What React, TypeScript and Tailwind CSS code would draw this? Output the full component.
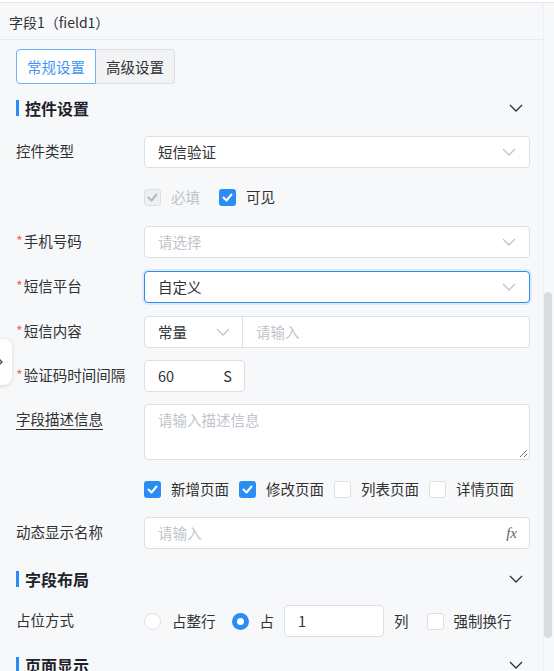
import { ReactNode } from 'react'

const font = { fontFamily: '"Noto Sans CJK SC", "Noto Sans", sans-serif' }

function Chevron({ className = '' }: { className?: string }) {
  return (
    <svg width="14" height="8" viewBox="0 0 14 8" fill="none" className={className}>
      <path d="M1 1l6 6 6-6" stroke="currentColor" strokeWidth="1.3" />
    </svg>
  )
}

function Check() {
  return (
    <svg width="11" height="9" viewBox="0 0 11 9" fill="none">
      <path d="M1.5 4.5l3 3 5-6" stroke="currentColor" strokeWidth="2" strokeLinecap="round" strokeLinejoin="round" />
    </svg>
  )
}

function Box({ checked, disabled }: { checked?: boolean; disabled?: boolean }) {
  if (disabled)
    return (
      <span className="flex w-[17px] h-[17px] items-center justify-center rounded-[3px] border border-[#dcdfe6] bg-[#eef0f3] text-[#b4b8bf]">
        <Check />
      </span>
    )
  if (checked)
    return (
      <span className="flex w-[17px] h-[17px] items-center justify-center rounded-[3px] bg-[#2a8cf5] text-white">
        <Check />
      </span>
    )
  return <span className="block w-[17px] h-[17px] rounded-[3px] border border-[#dcdfe6] bg-white" />
}

function SectionTitle({ title, className = '' }: { title: string; className?: string }) {
  return (
    <div className={`flex items-center justify-between h-6 ${className}`}>
      <div className="flex items-center gap-[6px]">
        <span className="block w-[3px] h-[16px] bg-[#2a8cf5]" />
        <span className="text-[16px] font-bold text-[#1d2129]">{title}</span>
      </div>
      <Chevron className="text-[#303133] mr-[7px]" />
    </div>
  )
}

function Label({ text, required, underline }: { text: string; required?: boolean; underline?: boolean }) {
  return (
    <div className="w-[128px] shrink-0 h-8 flex items-center pb-[3px] text-[#303133]">
      {required && <span className="text-[#f56c6c] mr-[1px]">*</span>}
      <span className={underline ? 'underline underline-offset-4' : ''}>{text}</span>
    </div>
  )
}

function Row({ children, className = '' }: { children: ReactNode; className?: string }) {
  return <div className={`flex items-start ${className}`}>{children}</div>
}

function Select({ value, placeholder, focused }: { value?: string; placeholder?: string; focused?: boolean }) {
  return (
    <div
      className={`flex-1 h-8 flex items-center justify-between px-[13px] bg-white rounded-[4px] border ${
        focused ? 'border-[#2a8cf5] shadow-[0_0_0_2px_rgba(42,140,245,0.12)]' : 'border-[#dcdfe6]'
      }`}
    >
      <span className={value ? 'text-[#303133]' : 'text-[#c0c4cc]'}>{value ?? placeholder}</span>
      <Chevron className="text-[#c0c4cc]" />
    </div>
  )
}

export default function App() {
  return (
    <div className="relative w-[554px] h-[671px] overflow-hidden bg-white text-[14.5px]" style={font}>
      <div className="mt-[2px] h-[669px] flex bg-[#f7f8fa] border-t border-[#e6e8eb]">
        <div className="flex-1 min-w-0 border-r border-[#eceef1]">
          <div className="h-[37px] flex items-center pl-[9px] pt-[2px] border-b border-[#e8eaed] text-[14px] text-[#303133]">
            字段1（field1）
          </div>

          <div className="pl-4 pr-[13px]">
            {/* tabs */}
            <div className="flex mt-[9px] h-[35px]">
              <div className="flex items-center px-[10px] bg-white border border-[#6cb2fa] rounded-l-[4px] text-[#3d95f5]">
                常规设置
              </div>
              <div className="flex items-center px-[10px] bg-[#f2f3f5] border border-l-0 border-[#dcdfe6] rounded-r-[4px] text-[#303133]">
                高级设置
              </div>
            </div>

            <SectionTitle title="控件设置" className="mt-[12px]" />

            <Row className="mt-[16px]">
              <Label text="控件类型" />
              <Select value="短信验证" />
            </Row>

            <Row className="mt-[13px]">
              <div className="w-[128px] shrink-0" />
              <div className="h-8 flex items-center">
                <Box disabled />
                <span className="ml-[10px] text-[#c0c4cc]">必填</span>
                <span className="ml-[19px]" />
                <Box checked />
                <span className="ml-[10px] text-[#303133]">可见</span>
              </div>
            </Row>

            <Row className="mt-[13px]">
              <Label text="手机号码" required />
              <Select placeholder="请选择" />
            </Row>

            <Row className="mt-[13px]">
              <Label text="短信平台" required />
              <Select value="自定义" focused />
            </Row>

            <Row className="mt-[13px]">
              <Label text="短信内容" required />
              <div className="flex-1 h-8 flex bg-white rounded-[4px] border border-[#dcdfe6]">
                <div className="w-[98px] flex items-center justify-between pl-[13px] pr-[12px] border-r border-[#dcdfe6] text-[#303133]">
                  常量
                  <Chevron className="text-[#c0c4cc]" />
                </div>
                <div className="flex items-center pl-[13px] text-[#c0c4cc]">请输入</div>
              </div>
            </Row>

            <Row className="mt-[12px]">
              <Label text="验证码时间间隔" required />
              <div className="w-[101px] h-8 flex items-center justify-between pl-[13px] pr-[12px] bg-white rounded-[4px] border border-[#dcdfe6] text-[#303133]">
                <span>60</span>
                <span>S</span>
              </div>
            </Row>

            <Row className="mt-[12px]">
              <Label text="字段描述信息" underline />
              <div className="relative flex-1 h-[56px] px-[13px] pt-[4px] bg-white rounded-[4px] border border-[#dcdfe6] text-[#c0c4cc]">
                请输入描述信息
                <svg width="9" height="9" viewBox="0 0 9 9" className="absolute right-[1px] bottom-[1px]">
                  <path d="M8 1L1 8M8 5L5 8" stroke="#777" strokeWidth="1" />
                </svg>
              </div>
            </Row>

            <Row className="mt-[13px]">
              <div className="w-[128px] shrink-0" />
              <div className="h-8 flex items-center text-[#303133]">
                <Box checked />
                <span className="ml-[10px]">新增页面</span>
                <span className="ml-[10px]" />
                <Box checked />
                <span className="ml-[10px]">修改页面</span>
                <span className="ml-[10px]" />
                <Box />
                <span className="ml-[10px]">列表页面</span>
                <span className="ml-[10px]" />
                <Box />
                <span className="ml-[10px]">详情页面</span>
              </div>
            </Row>

            <Row className="mt-[12px]">
              <Label text="动态显示名称" />
              <div className="flex-1 h-8 flex items-center justify-between pl-[13px] pr-[12px] bg-white rounded-[4px] border border-[#dcdfe6]">
                <span className="text-[#c0c4cc]">请输入</span>
                <span className="italic text-[#606266] text-[15px]" style={{ fontFamily: '"Liberation Serif", serif' }}>
                  fx
                </span>
              </div>
            </Row>

            <SectionTitle title="字段布局" className="mt-[18px]" />

            <Row className="mt-[14px]">
              <Label text="占位方式" />
              <div className="h-8 flex items-center text-[#303133]">
                <span className="block w-[17px] h-[17px] rounded-full border border-[#dcdfe6] bg-white" />
                <span className="ml-[11px]">占整行</span>
                <span className="ml-[16px]" />
                <span className="flex w-[17px] h-[17px] items-center justify-center rounded-full bg-[#2a8cf5]">
                  <span className="block w-[7px] h-[7px] rounded-full bg-white" />
                </span>
                <span className="ml-[11px]">占</span>
                <div className="ml-[10px] w-[100px] h-8 flex items-center pl-[13px] bg-white rounded-[4px] border border-[#dcdfe6]">
                  1
                </div>
                <span className="ml-[10px]">列</span>
                <span className="ml-[18px]" />
                <Box />
                <span className="ml-[10px]">强制换行</span>
              </div>
            </Row>

            <SectionTitle title="页面显示" className="mt-[16px]" />
          </div>
        </div>

        {/* scrollbar */}
        <div className="w-[10px] shrink-0 pt-[289px]">
          <div className="h-[346px] w-[8px] rounded-full bg-[#d9dbe0]" />
        </div>
      </div>

      {/* collapse handle on the left edge */}
      <div className="absolute left-[-14px] top-[339px] w-[26px] h-[46px] flex items-center justify-end pr-[7px] bg-white rounded-r-[8px] shadow-[0_1px_4px_rgba(0,0,0,0.15)]">
        <svg width="8" height="10" viewBox="0 0 8 10" fill="none">
          <path d="M1 1l4 4-4 4" stroke="#444" strokeWidth="1.3" />
        </svg>
      </div>
    </div>
  )
}
